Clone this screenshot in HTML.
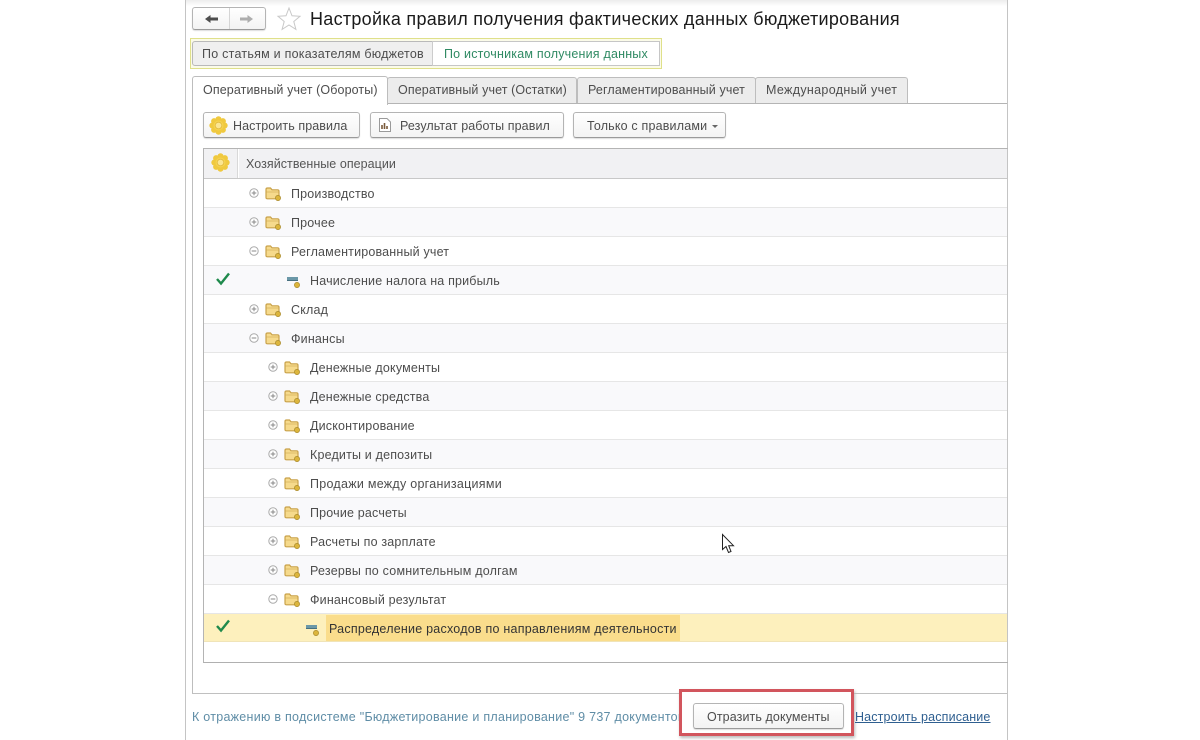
<!DOCTYPE html>
<html><head><meta charset="utf-8"><style>
html,body{margin:0;padding:0;width:1200px;height:740px;overflow:hidden;background:#fff}
body{position:relative;font-family:"Liberation Sans",sans-serif;font-size:12.5px;color:#444}
.a{position:absolute;box-sizing:border-box}
.t{position:absolute;white-space:nowrap;line-height:16px;letter-spacing:.18px;color:#4d4d4d;margin-top:1px}
.r{position:absolute;left:204px;width:803px;height:29px;border-bottom:1px solid #e6e6e6;box-sizing:border-box}
.g{background:#f9f9fb}
.btn{position:absolute;box-sizing:border-box;border:1px solid #b4b4b4;border-bottom-color:#9a9a9a;border-radius:3px;background:linear-gradient(#fff,#f3f3f3);box-shadow:0 1px 1px #ddd}
.tab{position:absolute;box-sizing:border-box;top:77px;height:26px;background:#ececec;border:1px solid #bdbdbd;border-bottom:none;border-radius:3px 3px 0 0}
svg{position:absolute;overflow:visible}
</style></head><body>
<svg width="0" height="0" style="position:absolute">
<defs>
<g id="f" transform="translate(-1,-1)"><path d="M1 3.5Q1 2 2.5 2H5.5L7 3.8H12.5Q14 3.8 14 5.3V11.5Q14 12.8 12.5 12.8H2.5Q1 12.8 1 11.5Z" fill="#f6da8c" stroke="#c9a24a" stroke-width="1.2"/><path d="M1.5 6H13.5" stroke="#d8b45e" stroke-width=".8"/><circle cx="13" cy="12" r="2.6" fill="#dcb53c" stroke="#a98a2c" stroke-width=".7"/></g>
<g id="p"><circle cx="5" cy="5" r="4.2" fill="#fff" stroke="#aaa"/><path d="M2.7 5H7.3M5 2.7V7.3" stroke="#888"/></g>
<g id="m"><circle cx="5" cy="5" r="4.2" fill="#fff" stroke="#aaa"/><path d="M2.7 5H7.3" stroke="#888"/></g>
<g id="d"><rect x="0" y="0" width="11" height="4" fill="#6b98a8"/><rect x="0" y="3" width="11" height="1" fill="#47707f"/><circle cx="10" cy="8" r="2.6" fill="#dcb53c" stroke="#a98a2c" stroke-width=".7"/></g>
<g id="c"><path d="M1 7L5 11.5L13 1.5" fill="none" stroke="#1f8a4c" stroke-width="2.4"/></g>
<g id="gear"><circle cx="8.5" cy="3.3" r="3" fill="#f0c93f"/><circle cx="8.5" cy="15.7" r="3" fill="#f0c93f"/><circle cx="2.3" cy="9.5" r="3" fill="#f0c93f"/><circle cx="14.7" cy="9.5" r="3" fill="#f0c93f"/><circle cx="4.1" cy="5.1" r="3" fill="#f0c93f"/><circle cx="12.9" cy="5.1" r="3" fill="#f0c93f"/><circle cx="4.1" cy="13.9" r="3" fill="#f0c93f"/><circle cx="12.9" cy="13.9" r="3" fill="#f0c93f"/><circle cx="8.5" cy="9.5" r="5" fill="#f5d24f"/><circle cx="8.5" cy="9.5" r="3.3" fill="#fbe693" stroke="#e2bb3f" stroke-width=".8"/></g>
</defs></svg>

<div class="a" style="left:185px;top:0;width:823px;height:740px;border-left:1px solid #c4c4c4;border-right:1px solid #c4c4c4"></div>
<div class="a" style="left:186px;top:0;width:821px;height:6px;background:linear-gradient(#ededed,#fff)"></div>

<!-- nav -->
<div class="btn" style="left:192px;top:7px;width:74px;height:23px"></div>
<div class="a" style="left:229px;top:8px;width:1px;height:21px;background:#d5d5d5"></div>
<svg style="left:205px;top:14px" width="14" height="10"><path d="M0 5L5.5 1V3.5H13V6.5H5.5V9Z" fill="#4d4d4d"/></svg>
<svg style="left:240px;top:14px" width="14" height="10"><path d="M13 5L7.5 1V3.5H0V6.5H7.5V9Z" fill="#adadad"/></svg>
<svg style="left:277px;top:7px" width="24" height="23"><path d="M12 1L15 8.8 23 9.3 16.8 14.5 18.9 22.4 12 18 5.1 22.4 7.2 14.5 1 9.3 9 8.8Z" fill="#fff" stroke="#c8c8c8"/></svg>
<div class="t" style="left:310px;top:7px;font-size:18px;line-height:22px;color:#1a1a1a;letter-spacing:.28px">Настройка правил получения фактических данных бюджетирования</div>

<!-- switch -->
<div class="a" style="left:190px;top:38px;width:472px;height:31px;border:1px solid #dfe08a;background:#fbfbe9"></div>
<div class="a" style="left:192px;top:41px;width:241px;height:25px;background:#efefef;border:1px solid #b9b9b9;border-radius:3px 0 0 3px"></div>
<div class="a" style="left:432px;top:41px;width:228px;height:25px;background:#fff;border:1px solid #c6c6c6;border-left:1px solid #ccc"></div>
<div class="t" style="left:202px;top:46px;letter-spacing:.24px;margin-top:0">По статьям и показателям бюджетов</div>
<div class="t" style="left:444px;top:46px;color:#2f8a63;letter-spacing:.2px;margin-top:0">По источникам получения данных</div>

<!-- tabs -->
<div class="a" style="left:192px;top:103px;width:815px;height:591px;border-left:1px solid #bdbdbd;border-top:1px solid #b4b4b4;border-bottom:1px solid #c0c0c0"></div>
<div class="tab" style="left:387px;width:190px"></div>
<div class="tab" style="left:577px;width:179px"></div>
<div class="tab" style="left:755px;width:153px"></div>
<div class="a" style="left:192px;top:76px;width:196px;height:29px;background:#fff;border:1px solid #bdbdbd;border-bottom:none;border-radius:3px 3px 0 0"></div>
<div class="t" style="left:203px;top:81px;letter-spacing:.11px">Оперативный учет (Обороты)</div>
<div class="t" style="left:398px;top:81px;letter-spacing:.11px">Оперативный учет (Остатки)</div>
<div class="t" style="left:588px;top:81px;letter-spacing:.13px">Регламентированный учет</div>
<div class="t" style="left:766px;top:81px;letter-spacing:.33px">Международный учет</div>

<!-- toolbar -->
<div class="btn" style="left:203px;top:112px;width:157px;height:26px"></div>
<svg style="left:210px;top:116px" width="17" height="19"><use href="#gear"/></svg>
<div class="t" style="left:233px;top:117px;letter-spacing:.08px">Настроить правила</div>
<div class="btn" style="left:370px;top:112px;width:194px;height:26px"></div>
<svg style="left:379px;top:118px" width="12" height="14"><path d="M.5.5H8L11.5 4V13.5H.5Z" fill="#fff" stroke="#9a9a9a"/><path d="M3 11V7M5.5 11V5M8 11V8" stroke="#7a5a3a" stroke-width="1.6"/></svg>
<div class="t" style="left:400px;top:117px;letter-spacing:.09px">Результат работы правил</div>
<div class="btn" style="left:573px;top:112px;width:153px;height:26px"></div>
<div class="t" style="left:587px;top:117px;letter-spacing:.18px">Только с правилами</div>
<svg style="left:712px;top:125px" width="6" height="3"><path d="M0 0H6L3 3Z" fill="#666"/></svg>

<!-- table -->
<div class="a" style="left:203px;top:148px;width:805px;height:515px;border:1px solid #b4b4b4;border-right:none;border-bottom-color:#b0b0b0"></div>
<div class="a" style="left:204px;top:149px;width:803px;height:30px;background:#f1f1f3;border-bottom:1px solid #c8c8c8"></div>
<div class="a" style="left:237px;top:149px;width:1px;height:29px;background:#d8d8d8"></div>
<div class="a" style="left:238px;top:149px;width:1px;height:29px;background:#fff"></div>
<svg style="left:212px;top:153px" width="17" height="19"><use href="#gear"/></svg>
<div class="t" style="left:246px;top:155px;color:#555;letter-spacing:.05px">Хозяйственные операции</div>

<div class="r" style="top:179px"></div>
<div class="r g" style="top:208px"></div>
<div class="r" style="top:237px"></div>
<div class="r g" style="top:266px"></div>
<div class="r" style="top:295px"></div>
<div class="r g" style="top:324px"></div>
<div class="r" style="top:353px"></div>
<div class="r g" style="top:382px"></div>
<div class="r" style="top:411px"></div>
<div class="r g" style="top:440px"></div>
<div class="r" style="top:469px"></div>
<div class="r g" style="top:498px"></div>
<div class="r" style="top:527px"></div>
<div class="r g" style="top:556px"></div>
<div class="r" style="top:585px"></div>
<div class="r" style="top:614px;background:#fdf0bd;height:28px;border-bottom:1px solid #f0e4b8"></div>
<div class="a" style="left:326px;top:615px;width:354px;height:26px;background:#fadd8c"></div>

<svg style="left:249px;top:188px" width="10" height="10"><use href="#p"/></svg><svg style="left:266px;top:187px" width="16" height="15"><use href="#f"/></svg><div class="t" style="left:291px;top:185px">Производство</div>
<svg style="left:249px;top:217px" width="10" height="10"><use href="#p"/></svg><svg style="left:266px;top:216px" width="16" height="15"><use href="#f"/></svg><div class="t" style="left:291px;top:214px">Прочее</div>
<svg style="left:249px;top:246px" width="10" height="10"><use href="#m"/></svg><svg style="left:266px;top:245px" width="16" height="15"><use href="#f"/></svg><div class="t" style="left:291px;top:243px">Регламентированный учет</div>
<svg style="left:216px;top:272px" width="14" height="13"><use href="#c"/></svg><svg style="left:287px;top:277px" width="14" height="12"><use href="#d"/></svg><div class="t" style="left:310px;top:272px">Начисление налога на прибыль</div>
<svg style="left:249px;top:304px" width="10" height="10"><use href="#p"/></svg><svg style="left:266px;top:303px" width="16" height="15"><use href="#f"/></svg><div class="t" style="left:291px;top:301px">Склад</div>
<svg style="left:249px;top:333px" width="10" height="10"><use href="#m"/></svg><svg style="left:266px;top:332px" width="16" height="15"><use href="#f"/></svg><div class="t" style="left:291px;top:330px">Финансы</div>
<svg style="left:268px;top:362px" width="10" height="10"><use href="#p"/></svg><svg style="left:285px;top:361px" width="16" height="15"><use href="#f"/></svg><div class="t" style="left:310px;top:359px">Денежные документы</div>
<svg style="left:268px;top:391px" width="10" height="10"><use href="#p"/></svg><svg style="left:285px;top:390px" width="16" height="15"><use href="#f"/></svg><div class="t" style="left:310px;top:388px">Денежные средства</div>
<svg style="left:268px;top:420px" width="10" height="10"><use href="#p"/></svg><svg style="left:285px;top:419px" width="16" height="15"><use href="#f"/></svg><div class="t" style="left:310px;top:417px">Дисконтирование</div>
<svg style="left:268px;top:449px" width="10" height="10"><use href="#p"/></svg><svg style="left:285px;top:448px" width="16" height="15"><use href="#f"/></svg><div class="t" style="left:310px;top:446px">Кредиты и депозиты</div>
<svg style="left:268px;top:478px" width="10" height="10"><use href="#p"/></svg><svg style="left:285px;top:477px" width="16" height="15"><use href="#f"/></svg><div class="t" style="left:310px;top:475px;letter-spacing:.27px">Продажи между организациями</div>
<svg style="left:268px;top:507px" width="10" height="10"><use href="#p"/></svg><svg style="left:285px;top:506px" width="16" height="15"><use href="#f"/></svg><div class="t" style="left:310px;top:504px">Прочие расчеты</div>
<svg style="left:268px;top:536px" width="10" height="10"><use href="#p"/></svg><svg style="left:285px;top:535px" width="16" height="15"><use href="#f"/></svg><div class="t" style="left:310px;top:533px">Расчеты по зарплате</div>
<svg style="left:268px;top:565px" width="10" height="10"><use href="#p"/></svg><svg style="left:285px;top:564px" width="16" height="15"><use href="#f"/></svg><div class="t" style="left:310px;top:562px;letter-spacing:.22px">Резервы по сомнительным долгам</div>
<svg style="left:268px;top:594px" width="10" height="10"><use href="#m"/></svg><svg style="left:285px;top:593px" width="16" height="15"><use href="#f"/></svg><div class="t" style="left:310px;top:591px">Финансовый результат</div>
<svg style="left:216px;top:619px" width="14" height="13"><use href="#c"/></svg><svg style="left:306px;top:625px" width="14" height="12"><use href="#d"/></svg><div class="t" style="left:329px;top:620px;color:#333;letter-spacing:.23px">Распределение расходов по направлениям деятельности</div>

<!-- cursor -->
<svg style="left:722px;top:534px" width="13" height="20"><path d="M.5.5V15.5L4 12.5 6.5 18.5 9 17.5 6.7 11.7H11.5Z" fill="#fff" stroke="#222"/></svg>

<!-- footer -->
<div class="t" style="left:192px;top:708px;color:#5f8da6;letter-spacing:.27px">К отражению в подсистеме "Бюджетирование и планирование" 9 737 документов</div>
<div class="a" style="left:679px;top:689px;width:175px;height:47px;border:3px solid #d2555d;background:#fff;box-shadow:1px 2px 3px #bbb"></div>
<div class="btn" style="left:693px;top:703px;width:151px;height:26px"></div>
<div class="t" style="left:707px;top:708px;letter-spacing:.1px">Отразить документы</div>
<div class="t" style="left:855px;top:708px;color:#2f5f90;text-decoration:underline;letter-spacing:.15px">Настроить расписание</div>
</body></html>
